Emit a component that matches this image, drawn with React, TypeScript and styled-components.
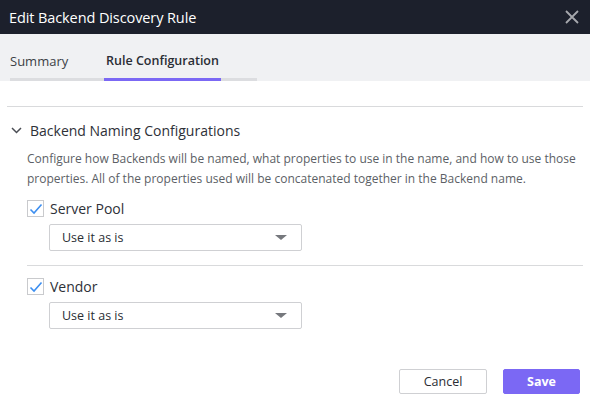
import React, { useState } from "react";
import styled, { createGlobalStyle } from "styled-components";

const GlobalStyle = createGlobalStyle`
  html, body {
    margin: 0;
    padding: 0;
    background: #fff;
    font-family: "Open Sans", "Noto Sans", sans-serif;
  }
  * { box-sizing: border-box; }
`;

const Dialog = styled.div`
  width: 590px;
  height: 405px;
  display: flex;
  flex-direction: column;
  background: #fff;
`;

const Header = styled.div`
  height: 34px;
  background: #1c202c;
  display: flex;
  align-items: center;
  justify-content: space-between;
  padding: 0 10px 0 9px;
`;

const Title = styled.div`
  color: #fff;
  font-size: 14.5px;
  letter-spacing: -0.1px;
`;

const CloseButton = styled.button`
  background: none;
  border: none;
  padding: 0;
  display: flex;
  cursor: pointer;
`;

const TabBar = styled.div`
  height: 47px;
  background: #f0f1f3;
  display: flex;
  align-items: flex-end;
  padding-left: 10px;
`;

const TabList = styled.div`
  width: 247px;
  display: flex;
  border-bottom: 3px solid #dcdde0;
`;

const Tab = styled.div<{ $active?: boolean }>`
  font-size: ${(p) => (p.$active ? "12.5px" : "13px")};
  line-height: 18px;
  white-space: nowrap;
  color: ${(p) => (p.$active ? "#2a2d35" : "#3c3f46")};
  font-weight: ${(p) => (p.$active ? 600 : 400)};
  padding-bottom: 8px;
  margin-bottom: -3px;
  border-bottom: 3px solid ${(p) => (p.$active ? "#7b68f4" : "transparent")};
  width: ${(p) => (p.$active ? "117px" : "94px")};
  text-align: ${(p) => (p.$active ? "center" : "left")};
  cursor: pointer;
`;

const Body = styled.div`
  flex: 1;
  padding: 25px 7px 0 7px;
  display: flex;
  flex-direction: column;
`;

const Divider = styled.div`
  height: 1px;
  background: #d9dadc;
`;

const SectionHeader = styled.div`
  display: flex;
  align-items: center;
  gap: 8px;
  margin-top: 14px;
  padding-left: 4px;
  font-size: 14px;
  color: #2e3138;
`;

const Section = styled.div`
  padding-left: 20px;
`;

const Description = styled.p`
  margin: 9px 0 0 0;
  font-size: 12px;
  line-height: 20px;
  color: #5c5f66;
`;

const Property = styled.div<{ $first?: boolean }>`
  padding-top: ${(p) => (p.$first ? 10 : 11)}px;
  padding-bottom: 14px;
`;

const CheckRow = styled.label`
  display: flex;
  align-items: center;
  gap: 6px;
  font-size: 14px;
  color: #2e3138;
  cursor: pointer;
`;

const Box = styled.span`
  width: 17px;
  height: 17px;
  border: 1px solid #c9cacd;
  background: #fff;
  display: flex;
  align-items: center;
  justify-content: center;
`;

const Select = styled.div`
  margin: 6px 0 0 22px;
  width: 253px;
  height: 27px;
  border: 1px solid #cfd0d3;
  border-radius: 2px;
  display: flex;
  align-items: center;
  justify-content: space-between;
  padding: 0 14px 0 12px;
  font-size: 12.5px;
  color: #2a2d33;
  cursor: pointer;
`;

const Caret = styled.span`
  width: 0;
  height: 0;
  border-left: 6px solid transparent;
  border-right: 6px solid transparent;
  border-top: 5px solid #76787d;
`;

const Footer = styled.div`
  display: flex;
  justify-content: flex-end;
  gap: 16px;
  padding: 0 10px 11px 0;
`;

const Button = styled.button<{ $primary?: boolean }>`
  height: 25px;
  width: ${(p) => (p.$primary ? 77 : 88)}px;
  border-radius: 2px;
  font-family: inherit;
  font-size: 12.5px;
  font-weight: ${(p) => (p.$primary ? 700 : 400)};
  color: ${(p) => (p.$primary ? "#fff" : "#2a2d33")};
  background: ${(p) => (p.$primary ? "#7b68f4" : "#fff")};
  border: 1px solid ${(p) => (p.$primary ? "#7b68f4" : "#cfd0d3")};
  cursor: pointer;
`;

const Check = () => (
  <svg width="14" height="12" viewBox="0 0 14 12">
    <path d="M1.5 6.5 L5 10 L12.5 1.5" fill="none" stroke="#3d8ff0" strokeWidth="1.6" />
  </svg>
);

const properties = ["Server Pool", "Vendor"];

const App = () => {
  const [checked, setChecked] = useState<Record<string, boolean>>({
    "Server Pool": true,
    Vendor: true,
  });

  return (
    <Dialog>
      <GlobalStyle />
      <Header>
        <Title>Edit Backend Discovery Rule</Title>
        <CloseButton>
          <svg width="16" height="16" viewBox="0 0 16 16">
            <path d="M2 2 L14 14 M14 2 L2 14" stroke="#a6a8ad" strokeWidth="1.8" />
          </svg>
        </CloseButton>
      </Header>
      <TabBar>
        <TabList>
          <Tab>Summary</Tab>
          <Tab $active>Rule Configuration</Tab>
        </TabList>
      </TabBar>
      <Body>
        <Divider />
        <SectionHeader>
          <svg width="11" height="7" viewBox="0 0 11 7">
            <path d="M1 1 L5.5 5.5 L10 1" fill="none" stroke="#4a4d54" strokeWidth="1.5" />
          </svg>
          Backend Naming Configurations
        </SectionHeader>
        <Section>
          <Description>
            Configure how Backends will be named, what properties to use in the name, and how to use those
            properties. All of the properties used will be concatenated together in the Backend name.
          </Description>
          {properties.map((name, i) => (
            <React.Fragment key={name}>
              {i > 0 && <Divider />}
              <Property $first={i === 0}>
                <CheckRow onClick={() => setChecked({ ...checked, [name]: !checked[name] })}>
                  <Box>{checked[name] && <Check />}</Box>
                  {name}
                </CheckRow>
                <Select>
                  Use it as is
                  <Caret />
                </Select>
              </Property>
            </React.Fragment>
          ))}
        </Section>
      </Body>
      <Footer>
        <Button>Cancel</Button>
        <Button $primary>Save</Button>
      </Footer>
    </Dialog>
  );
};

export default App;
